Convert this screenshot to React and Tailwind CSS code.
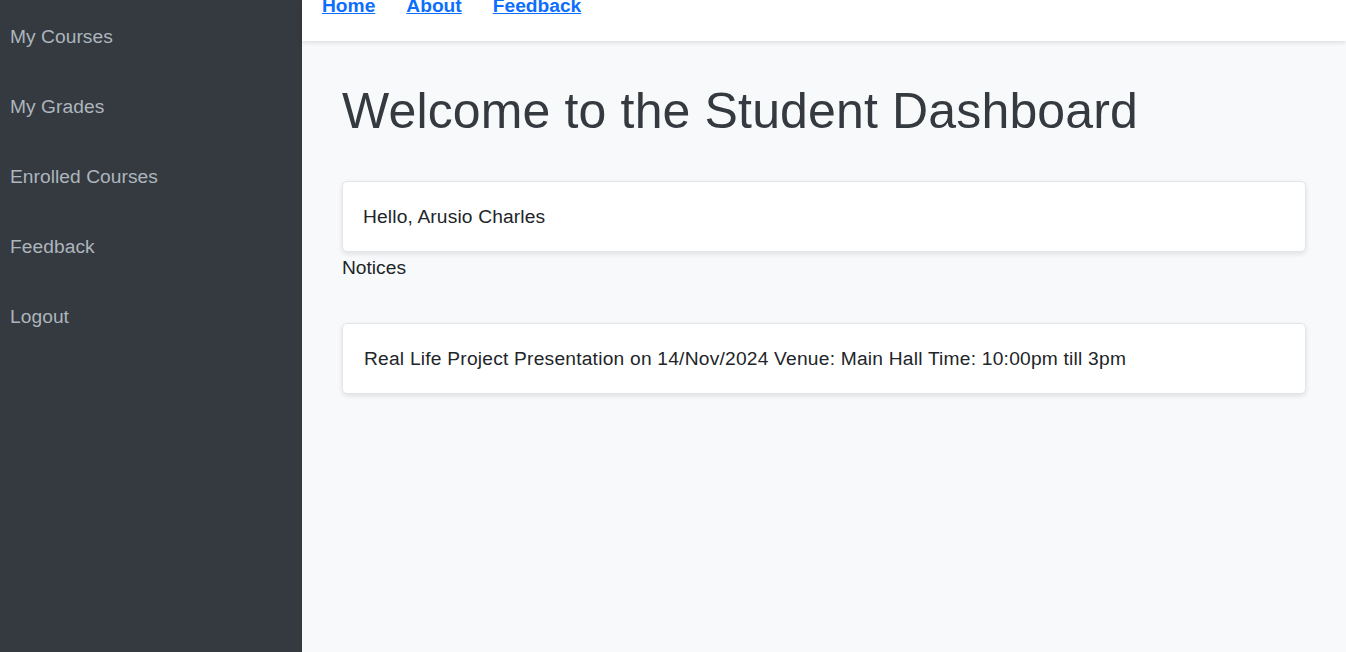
export default function App() {
  const links = ['My Courses', 'My Grades', 'Enrolled Courses', 'Feedback', 'Logout'];

  return (
    <div className="flex h-[652px] w-full overflow-hidden font-['Liberation_Sans',Arial,sans-serif]">
      {/* Sidebar */}
      <aside className="w-[302px] shrink-0 bg-[#343a40] pt-[26px]">
        <ul className="flex flex-col">
          {links.map((l) => (
            <li key={l} className="pl-[10px] h-[70px] text-[19.2px] leading-[22px] tracking-[0.05px] text-[#adb5bd]">
              {l}
            </li>
          ))}
        </ul>
      </aside>

      {/* Main */}
      <div className="flex flex-1 flex-col bg-[#f8f9fa]">
        <header className="relative z-10 h-[41px] shrink-0 bg-white px-5 shadow-[0_2px_4px_rgba(0,0,0,0.1)]">
          <nav className="-mt-[5px] flex gap-[31px] text-[19.2px] font-bold leading-[22px]">
            <a href="#" className="text-[#0d6efd] underline">Home</a>
            <a href="#" className="text-[#0d6efd] underline">About</a>
            <a href="#" className="text-[#0d6efd] underline">Feedback</a>
          </nav>
        </header>

        <main className="px-10 pt-10 text-[#212529]">
          <h1 className="mb-10 text-[50px] leading-[60px] tracking-[0.15px] text-[#343a40]">
            Welcome to the Student Dashboard
          </h1>

          <div className="rounded-[5px] border border-[#e3e5e8] bg-white px-5 pt-[23px] pb-[22px] text-[19.2px] leading-[24px] tracking-[0.15px] shadow-[0_2px_5px_rgba(0,0,0,0.1)]">
            Hello, Arusio Charles
          </div>

          <h2 className="mt-1 mb-[43px] text-[19.2px] leading-[24px]">Notices</h2>

          <div className="rounded-[5px] border border-[#e3e5e8] bg-white pl-[21px] pr-5 pt-[23px] pb-[22px] text-[19.2px] leading-[24px] tracking-[0.22px] shadow-[0_2px_5px_rgba(0,0,0,0.1)]">
            Real Life Project Presentation on 14/Nov/2024 Venue: Main Hall Time: 10:00pm till 3pm
          </div>
        </main>
      </div>
    </div>
  );
}
